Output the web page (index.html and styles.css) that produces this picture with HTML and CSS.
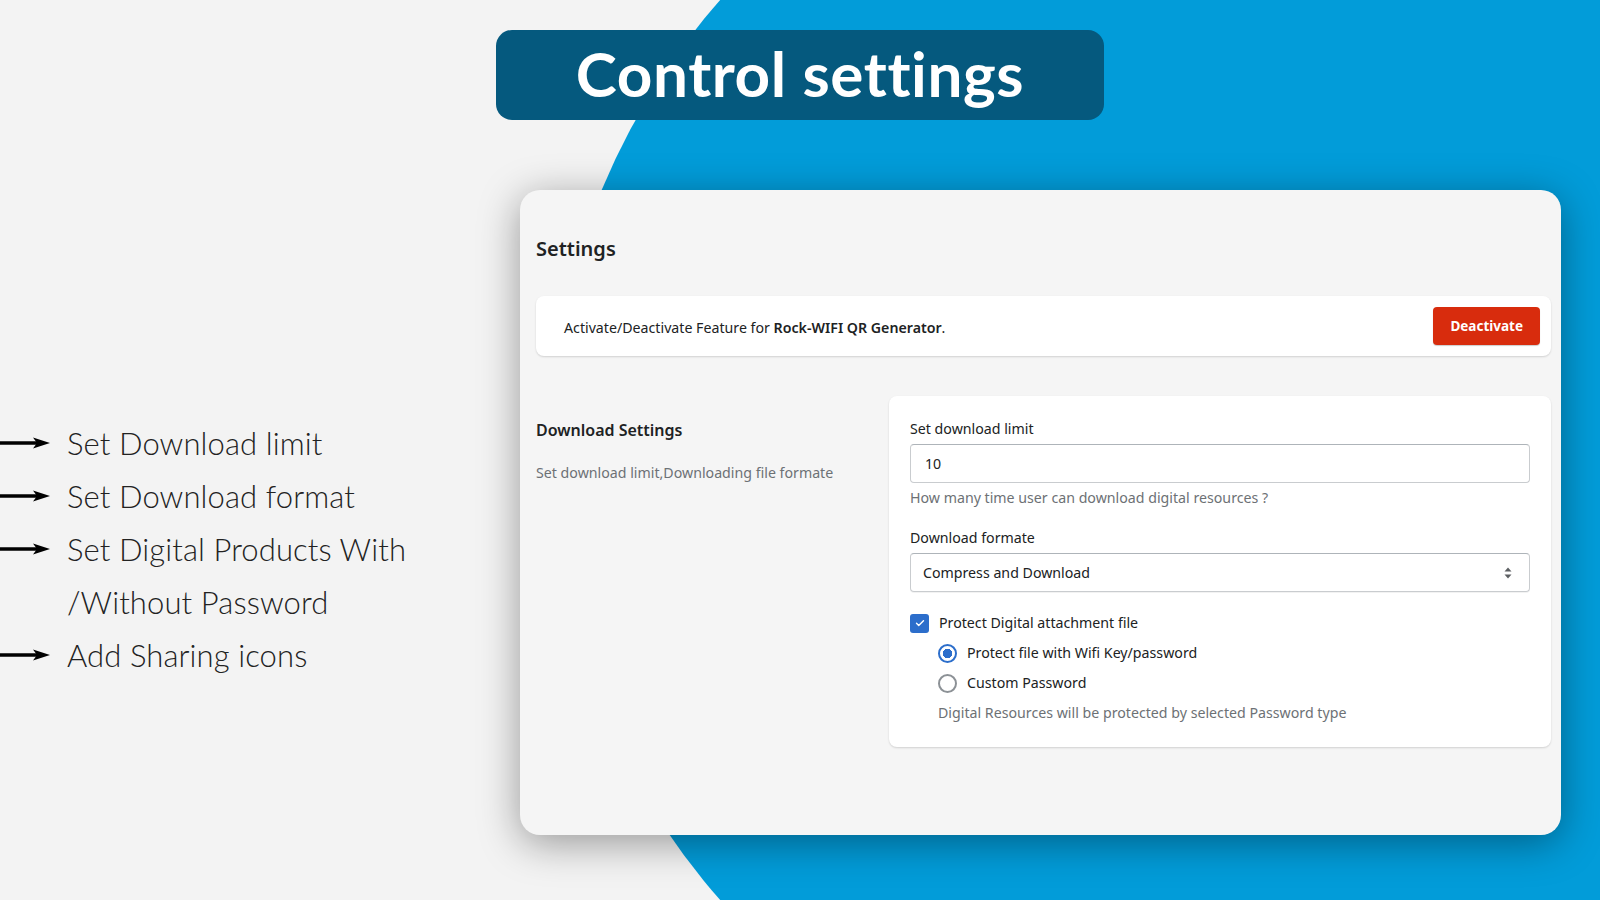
FILE: index.html
```html
<!DOCTYPE html>
<html lang="en">
<head>
  <meta charset="UTF-8" />
  <meta name="viewport" content="width=device-width, initial-scale=1.0"/>
  <title>Control settings</title>
  <link rel="stylesheet" href="styles.css">
</head>
<body>
  <div class="slide">
    <div class="bg-circle"></div>

    <header class="title-wrap">
      <h1 class="title">Control settings</h1>
    </header>

    <div class="content">
      <ul class="features">
        <li>
          <svg class="arrow" viewBox="0 0 50 14" width="50" height="14"><path d="M0 7H38" stroke="#000" stroke-width="3.5"/><path d="M33 1.5L50 7L33 12.5L37 7Z" fill="#000"/></svg>
          <span>Set Download limit</span>
        </li>
        <li>
          <svg class="arrow" viewBox="0 0 50 14" width="50" height="14"><path d="M0 7H38" stroke="#000" stroke-width="3.5"/><path d="M33 1.5L50 7L33 12.5L37 7Z" fill="#000"/></svg>
          <span>Set Download format</span>
        </li>
        <li>
          <svg class="arrow" viewBox="0 0 50 14" width="50" height="14"><path d="M0 7H38" stroke="#000" stroke-width="3.5"/><path d="M33 1.5L50 7L33 12.5L37 7Z" fill="#000"/></svg>
          <span>Set Digital Products With</span>
        </li>
        <li class="no-arrow">
          <span>/Without Password</span>
        </li>
        <li>
          <svg class="arrow" viewBox="0 0 50 14" width="50" height="14"><path d="M0 7H38" stroke="#000" stroke-width="3.5"/><path d="M33 1.5L50 7L33 12.5L37 7Z" fill="#000"/></svg>
          <span>Add Sharing icons</span>
        </li>
      </ul>

      <section class="window">
        <h2 class="page-title">Settings</h2>

        <div class="activate-bar">
          <p>Activate/Deactivate Feature for <strong>Rock-WIFI QR Generator</strong>.</p>
          <button class="btn-danger">Deactivate</button>
        </div>

        <div class="layout-section">
          <div class="section-info">
            <h3>Download Settings</h3>
            <p>Set download limit,Downloading file formate</p>
          </div>

          <div class="panel">
            <label class="field-label">Set download limit</label>
            <div class="text-field">10</div>
            <p class="help">How many time user can download digital resources ?</p>

            <label class="field-label second">Download formate</label>
            <div class="select">
              <span>Compress and Download</span>
              <svg class="select-arrows" viewBox="0 0 8 12" width="8" height="12"><path d="M4 0.5L7.5 4.5H0.5Z" fill="#5c5f62"/><path d="M4 11.5L7.5 7.5H0.5Z" fill="#5c5f62"/></svg>
            </div>

            <div class="check-row">
              <span class="checkbox">
                <svg viewBox="0 0 20 20" width="14" height="14"><path d="M5 10.5l3.2 3.2L15 6.8" fill="none" stroke="#fff" stroke-width="2" stroke-linecap="round" stroke-linejoin="round"/></svg>
              </span>
              <span>Protect Digital attachment file</span>
            </div>

            <div class="radio-group">
              <div class="radio-row">
                <span class="radio checked"></span>
                <span>Protect file with Wifi Key/password</span>
              </div>
              <div class="radio-row">
                <span class="radio"></span>
                <span>Custom Password</span>
              </div>
              <p class="help">Digital Resources will be protected by selected Password type</p>
            </div>
          </div>
        </div>
      </section>
    </div>
  </div>
</body>
</html>
```

FILE: styles.css
```css
:root {
  --page: #f3f3f3;
  --blue: #029cd9;
  --navy: #05597e;
  --text: #202223;
  --subdued: #6d7175;
  --border: #c9cccf;
  --accent: #2c6ecb;
  --critical: #d82c0d;
}

body {
  margin: 0;
  background: var(--page);
  font-family: 'Noto Sans', 'Open Sans', sans-serif;
  color: var(--text);
}

.slide {
  position: relative;
  width: 1600px;
  height: 900px;
  overflow: hidden;
  background: var(--page);
}

/* big blue round shape on the right */
.bg-circle {
  position: absolute;
  left: 550px;
  top: -230px;
  width: 1360px;
  height: 1360px;
  border-radius: 50%;
  background: var(--blue);
}

.title-wrap {
  position: relative;
  display: flex;
  justify-content: center;
  padding-top: 30px;
}

.title {
  margin: 0;
  width: 608px;
  height: 90px;
  box-sizing: border-box;
  background: var(--navy);
  border-radius: 16px;
  color: white;
  font-family: 'Lato', sans-serif;
  font-weight: 700;
  font-size: 62px;
  line-height: 86px;
  text-align: center;
  letter-spacing: 0.6px;
}

.content {
  position: relative;
  display: flex;
  margin-top: 70px;
}

.features {
  list-style: none;
  margin: 0;
  padding: 226px 0 0 0;
  width: 520px;
  font-family: 'Lato', sans-serif;
  font-weight: 300;
  font-size: 31px;
  color: #222;
}

.features li {
  display: flex;
  align-items: center;
  height: 53px;
  gap: 17px;
  letter-spacing: 0.1px;
}

.features li.no-arrow {
  padding-left: 67px;
}

.arrow {
  flex: none;
}

.window {
  width: 1041px;
  height: 645px;
  box-sizing: border-box;
  background: #f5f5f5;
  border-radius: 20px;
  box-shadow: 0 8px 40px rgba(0, 0, 0, 0.38);
  padding: 45px 10px 0 16px;
}

.page-title {
  margin: 0 0 33px;
  font-size: 20px;
  font-weight: 600;
  line-height: 28px;
}

.activate-bar {
  display: flex;
  align-items: center;
  justify-content: space-between;
  height: 60px;
  background: white;
  border-radius: 8px;
  box-shadow: 0 1px 2px rgba(0, 0, 0, 0.15);
  padding: 0 11px 0 28px;
}

.activate-bar p {
  margin: 3px 0 0;
  font-size: 14.2px;
}

.activate-bar strong {
  font-weight: 600;
}

.btn-danger {
  background: var(--critical);
  color: white;
  border: none;
  border-radius: 4px;
  height: 38px;
  padding: 0 17px;
  font-family: inherit;
  font-size: 13.5px;
  font-weight: 700;
  box-shadow: 0 1px 1px rgba(0, 0, 0, 0.2);
}

.layout-section {
  display: flex;
  margin-top: 40px;
}

.section-info {
  width: 353px;
  padding-top: 23px;
}

.section-info h3 {
  margin: 0;
  font-size: 16px;
  font-weight: 600;
  line-height: 22px;
}

.section-info p {
  margin: 22px 0 0;
  font-size: 14.2px;
  color: var(--subdued);
}

.panel {
  flex: 1;
  background: white;
  border-radius: 8px;
  box-shadow: 0 1px 2px rgba(0, 0, 0, 0.15);
  padding: 23px 21px 19px;
}

.field-label {
  display: block;
  font-size: 14.2px;
  line-height: 20px;
}

.field-label.second {
  margin-top: 20px;
}

.text-field,
.select {
  display: flex;
  align-items: center;
  box-sizing: border-box;
  height: 39px;
  margin-top: 5px;
  border: 1px solid var(--border);
  border-top-color: #aeb4b9;
  border-radius: 4px;
  font-size: 14.2px;
}

.text-field {
  padding-left: 14px;
}

.select {
  justify-content: space-between;
  padding: 0 17px 0 12px;
  box-shadow: 0 1px 0 rgba(0, 0, 0, 0.05);
}

.help {
  margin: 5px 0 0;
  font-size: 14.2px;
  line-height: 20px;
  color: var(--subdued);
}

.check-row,
.radio-row {
  display: flex;
  align-items: center;
  gap: 10px;
  font-size: 14.2px;
  line-height: 20px;
}

.check-row {
  margin-top: 21px;
}

.checkbox {
  display: flex;
  align-items: center;
  justify-content: center;
  width: 19px;
  height: 19px;
  border-radius: 3px;
  background: var(--accent);
}

.radio-group {
  padding-left: 28px;
  margin-top: 5px;
}

.radio-row {
  height: 30px;
}

.radio {
  box-sizing: border-box;
  width: 19px;
  height: 19px;
  border-radius: 50%;
  border: 2px solid #8c9196;
  background: white;
}

.radio.checked {
  border-color: var(--accent);
  background: radial-gradient(circle, var(--accent) 0 4.5px, white 5px);
}

.radio-group .help {
  margin-top: 0;
  line-height: 30px;
}
```
